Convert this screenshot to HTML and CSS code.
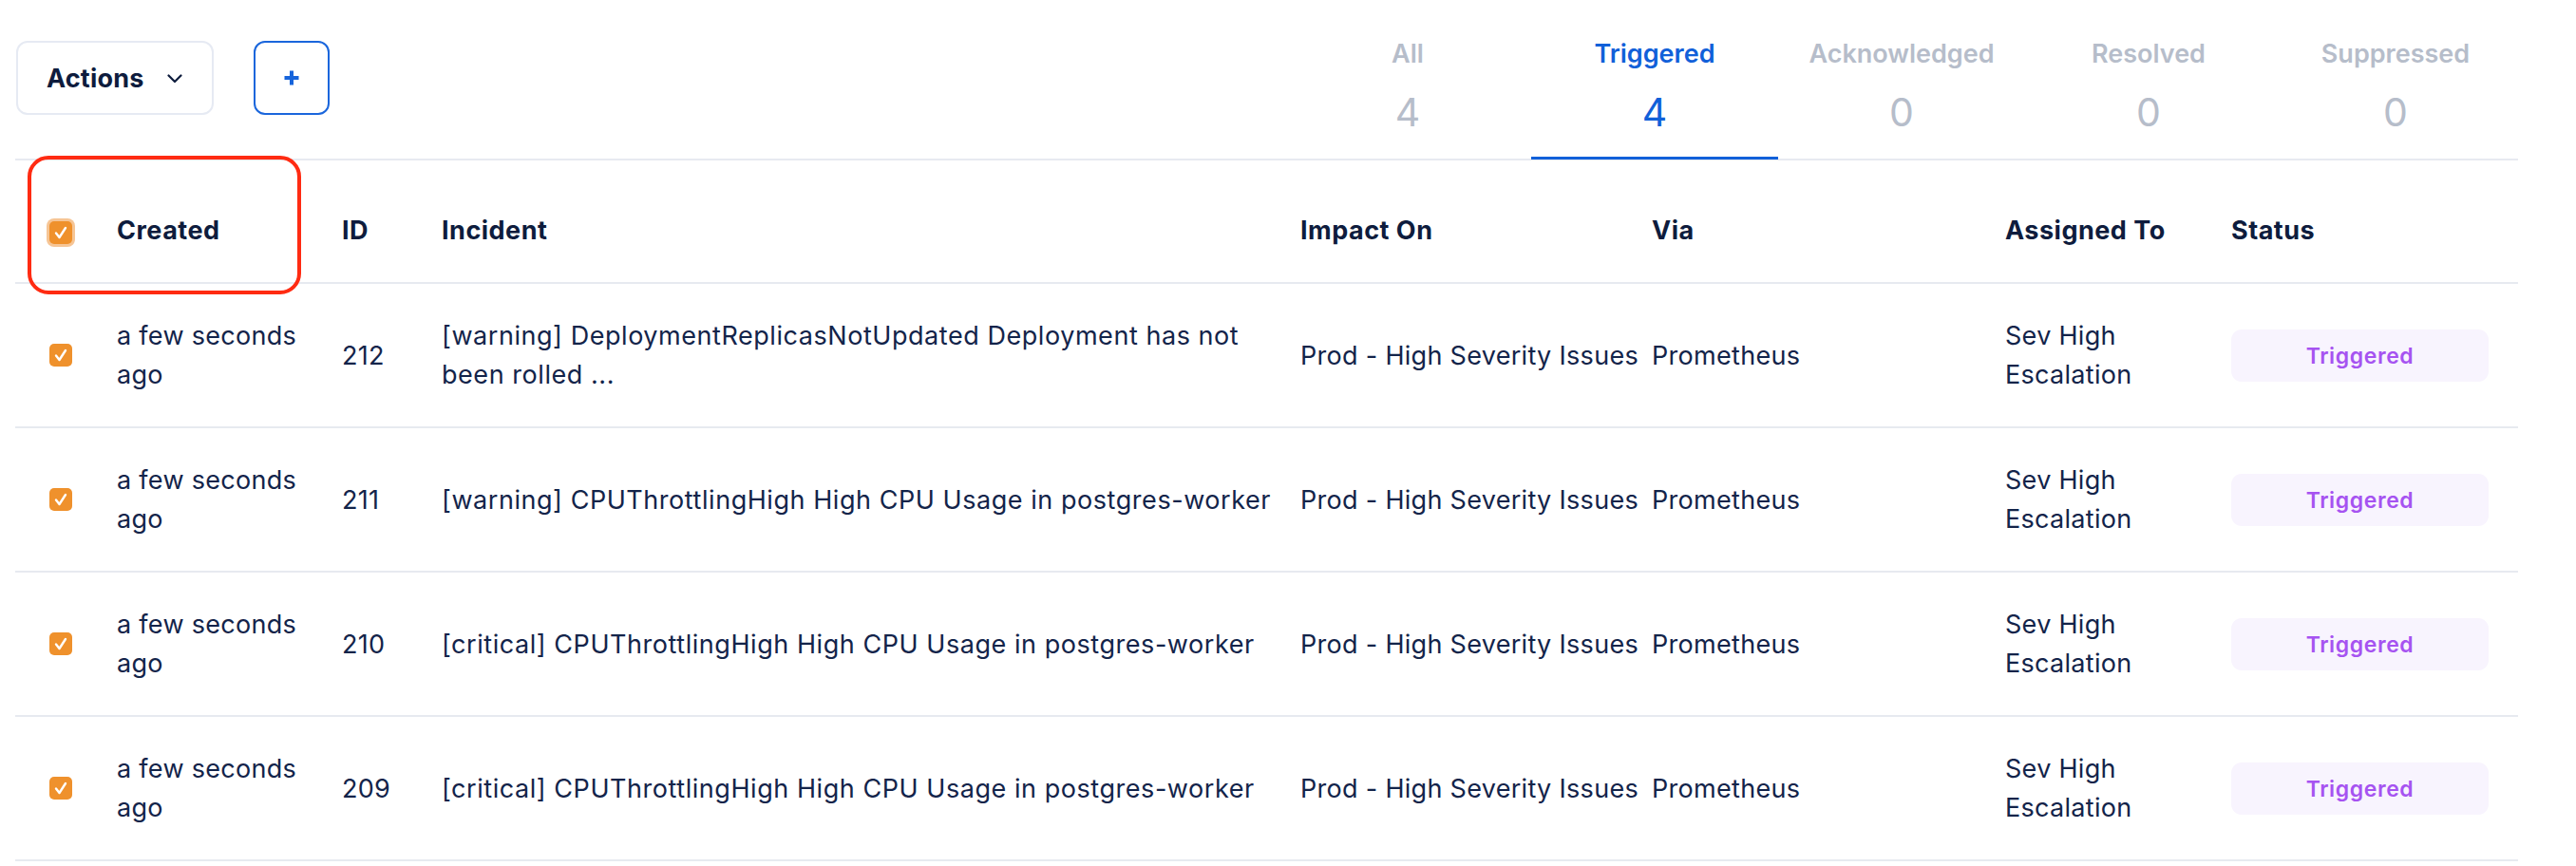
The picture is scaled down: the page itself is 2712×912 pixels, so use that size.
FILE: index.html
```html
<!DOCTYPE html>
<html lang="en">
<head>
<meta charset="utf-8">
<title>Incidents</title>
<link rel="stylesheet" href="styles.css">
</head>
<body>
<div class="page">
  <div class="toolbar">
    <div class="toolbar-left">
      <button class="btn btn-actions">
        <span>Actions</span>
        <svg class="chevron" width="16" height="10" viewBox="0 0 16 10"><path d="M1.5 1.5 L8 8 L14.5 1.5" fill="none" stroke="#0e1c3d" stroke-width="2.2" stroke-linecap="round" stroke-linejoin="round"/></svg>
      </button>
      <button class="btn btn-add" aria-label="Add">
        <svg width="18" height="18" viewBox="0 0 18 18"><path d="M9 1.5 V16.5 M1.5 9 H16.5" fill="none" stroke="#1664db" stroke-width="4" stroke-linecap="butt"/></svg>
      </button>
    </div>
    <nav class="tabs">
      <div class="tab"><span class="tab-label">All</span><span class="tab-count">4</span></div>
      <div class="tab active"><span class="tab-label">Triggered</span><span class="tab-count">4</span></div>
      <div class="tab"><span class="tab-label">Acknowledged</span><span class="tab-count">0</span></div>
      <div class="tab"><span class="tab-label">Resolved</span><span class="tab-count">0</span></div>
      <div class="tab"><span class="tab-label">Suppressed</span><span class="tab-count">0</span></div>
    </nav>
  </div>

  <div class="table">
    <div class="row head">
      <div class="cell cell-check"><span class="checkbox checkbox-head"><svg viewBox="0 0 24 24"><path d="M7 12.5 L10.5 17 L17 7" fill="none" stroke="#fff" stroke-width="2.4" stroke-linecap="round" stroke-linejoin="round"/></svg></span></div>
      <div class="cell">Created</div>
      <div class="cell">ID</div>
      <div class="cell">Incident</div>
      <div class="cell">Impact On</div>
      <div class="cell">Via</div>
      <div class="cell">Assigned To</div>
      <div class="cell">Status</div>
    </div>

    <div class="row">
      <div class="cell cell-check"><span class="checkbox"><svg viewBox="0 0 24 24"><path d="M7 12.5 L10.5 17 L17 7" fill="none" stroke="#fff" stroke-width="2.4" stroke-linecap="round" stroke-linejoin="round"/></svg></span></div>
      <div class="cell">a few seconds ago</div>
      <div class="cell">212</div>
      <div class="cell cell-incident">[warning] DeploymentReplicasNotUpdated Deployment has not been rolled ...</div>
      <div class="cell nowrap">Prod - High Severity Issues</div>
      <div class="cell">Prometheus</div>
      <div class="cell">Sev High Escalation</div>
      <div class="cell"><span class="badge">Triggered</span></div>
    </div>

    <div class="row">
      <div class="cell cell-check"><span class="checkbox"><svg viewBox="0 0 24 24"><path d="M7 12.5 L10.5 17 L17 7" fill="none" stroke="#fff" stroke-width="2.4" stroke-linecap="round" stroke-linejoin="round"/></svg></span></div>
      <div class="cell">a few seconds ago</div>
      <div class="cell">211</div>
      <div class="cell cell-incident">[warning] CPUThrottlingHigh High CPU Usage in postgres-worker</div>
      <div class="cell nowrap">Prod - High Severity Issues</div>
      <div class="cell">Prometheus</div>
      <div class="cell">Sev High Escalation</div>
      <div class="cell"><span class="badge">Triggered</span></div>
    </div>

    <div class="row">
      <div class="cell cell-check"><span class="checkbox"><svg viewBox="0 0 24 24"><path d="M7 12.5 L10.5 17 L17 7" fill="none" stroke="#fff" stroke-width="2.4" stroke-linecap="round" stroke-linejoin="round"/></svg></span></div>
      <div class="cell">a few seconds ago</div>
      <div class="cell">210</div>
      <div class="cell cell-incident">[critical] CPUThrottlingHigh High CPU Usage in postgres-worker</div>
      <div class="cell nowrap">Prod - High Severity Issues</div>
      <div class="cell">Prometheus</div>
      <div class="cell">Sev High Escalation</div>
      <div class="cell"><span class="badge">Triggered</span></div>
    </div>

    <div class="row">
      <div class="cell cell-check"><span class="checkbox"><svg viewBox="0 0 24 24"><path d="M7 12.5 L10.5 17 L17 7" fill="none" stroke="#fff" stroke-width="2.4" stroke-linecap="round" stroke-linejoin="round"/></svg></span></div>
      <div class="cell">a few seconds ago</div>
      <div class="cell">209</div>
      <div class="cell cell-incident">[critical] CPUThrottlingHigh High CPU Usage in postgres-worker</div>
      <div class="cell nowrap">Prod - High Severity Issues</div>
      <div class="cell">Prometheus</div>
      <div class="cell">Sev High Escalation</div>
      <div class="cell"><span class="badge">Triggered</span></div>
    </div>
  </div>

  <div class="highlight"></div>
</div>
</body>
</html>
```

FILE: styles.css
```css
* { box-sizing: border-box; }

html, body {
  margin: 0;
  padding: 0;
  background: #ffffff;
}

body {
  font-family: Inter, "Open Sans", "Liberation Sans", sans-serif;
  color: #13244a;
}

.page {
  position: relative;
  margin-left: 16px;
  width: 2635px;
}

/* ---------- toolbar ---------- */
.toolbar {
  display: flex;
  justify-content: space-between;
  align-items: flex-start;
  border-bottom: 2px solid #e7eaf1;
}

.toolbar-left {
  display: flex;
  gap: 42px;
  margin-top: 43px;
  padding-left: 1px;
}

.btn {
  font-family: inherit;
  background: #fff;
  border-radius: 12px;
  height: 78px;
  cursor: pointer;
  display: flex;
  align-items: center;
  padding: 0;
}

.btn-actions {
  width: 208px;
  border: 2px solid #e6eaf3;
  padding-left: 30px;
  gap: 24px;
  font-size: 27px;
  font-weight: 700;
  color: #0e1c3d;
  letter-spacing: 0.2px;
}

.chevron { margin-top: 2px; }

.btn-add {
  width: 80px;
  border: 2px solid #1a66dc;
  justify-content: center;
}

.tabs {
  display: flex;
  margin-right: -1px;
}

.tab {
  width: 260px;
  display: flex;
  flex-direction: column;
  align-items: center;
  padding-top: 40px;
  padding-bottom: 22px;
  border-bottom: 3px solid transparent;
  margin-bottom: -1px;
  color: #b6bdca;
}

.tab.active {
  color: #1160d9;
  border-bottom-color: #1160d9;
}

.tab-label {
  font-size: 27px;
  line-height: 34px;
  font-weight: 600;
}

.tab-count {
  margin-top: 19px;
  font-size: 41px;
  line-height: 50px;
  font-weight: 400;
}

/* ---------- table ---------- */
.table {
  display: flex;
  flex-direction: column;
}

.row {
  display: grid;
  grid-template-columns: 107px 237px 105px 904px 370px 372px 238px 302px;
  align-items: center;
  height: 152px;
  border-bottom: 2px solid #e7eaf0;
  font-size: 27px;
  letter-spacing: 0.3px;
  line-height: 41px;
}

.row.head {
  height: 130px;
  padding-top: 18px;
  font-weight: 700;
  color: #0e1c3d;
  font-size: 27px;
  letter-spacing: 0.5px;
}

.cell {
  padding-right: 20px;
}

.cell-incident {
  padding-right: 20px;
  letter-spacing: 0.55px;
}

.nowrap { white-space: nowrap; }

.cell-check {
  padding-left: 36px;
  display: flex;
  align-items: center;
}

.checkbox {
  width: 24px;
  height: 24px;
  border-radius: 5px;
  background: #ef912c;
  display: flex;
  align-items: center;
  justify-content: center;
}

.checkbox svg {
  width: 24px;
  height: 24px;
}

.checkbox-head {
  box-shadow: 0 0 0 3px #f6c595;
  margin-top: 6px;
}

.badge {
  display: flex;
  align-items: center;
  justify-content: center;
  width: 271px;
  height: 55px;
  border-radius: 11px;
  background: #f8f4fe;
  color: #a653f1;
  font-size: 23px;
  font-weight: 600;
  letter-spacing: 0.6px;
  padding-top: 2px;
}

/* ---------- annotation highlight ---------- */
.highlight {
  position: absolute;
  left: 13px;
  top: 164px;
  width: 288px;
  height: 146px;
  border: 4px solid #ff2b12;
  border-radius: 22px;
  pointer-events: none;
}
```
